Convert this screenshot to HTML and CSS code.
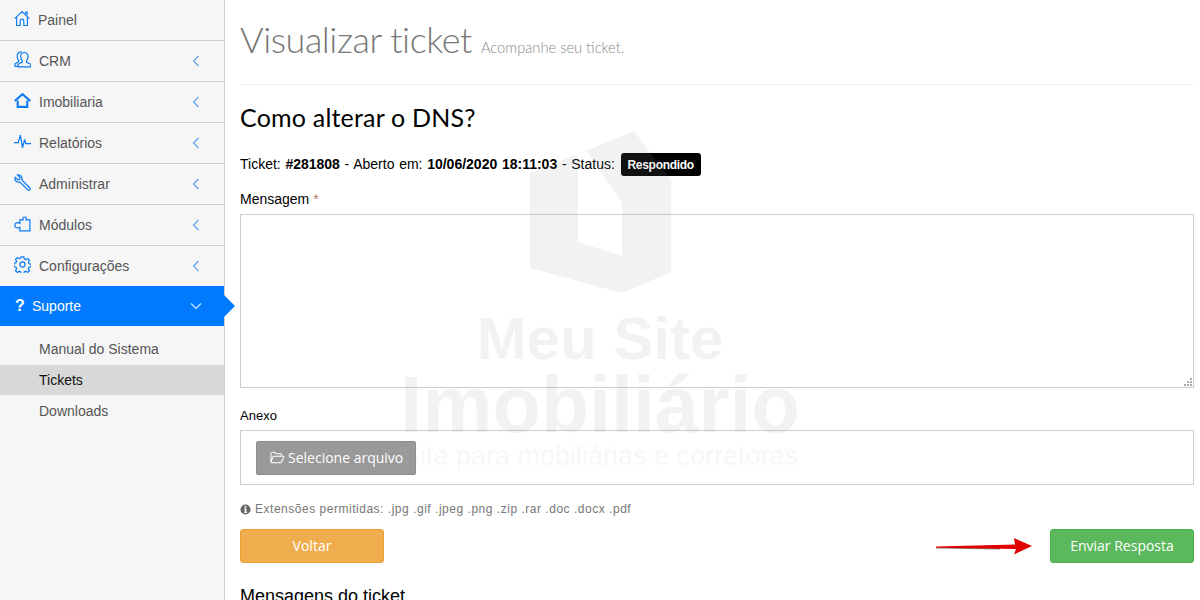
FILE: index.html
```html
<!DOCTYPE html>
<html lang="en">
<head>
    <meta charset="UTF-8">
    <title>Visualizar ticket</title>
    <link rel="stylesheet" href="styles.css">
</head>
<body>
    <div class="app">
        <nav class="sidebar">
            <a class="nav-item">
                <svg class="nav-icon home" viewBox="0 0 16 16"><path d="M.7 8.200 8 1l7.300 7.200M2.600 6.600V15h3.600v-4.600a1.800 1.800 0 0 1 3.600 0V15h3.600V6.600M11.600 3.200V1.600h1.600v3.200"/></svg>
                <span class="nav-label">Painel</span>
            </a>
            <a class="nav-item">
                <svg class="nav-icon" viewBox="0 0 16 16"><path d="M7.200 1C4.500.5 3 2.500 3 5c0 1.500.5 3 1.500 4v1L1 12v2.500h2.800"/><path d="M9.700 1.400c-2 0-3.400 1.600-3.400 3.800 0 1.500.6 2.900 1.500 3.800v1.400L3.800 12.500V15h12v-2.500l-4-2.100V9c.9-.9 1.400-2.300 1.400-3.800 0-2.200-1.500-3.800-3.500-3.800z"/></svg>
                <span class="nav-label">CRM</span>
                <svg class="chev" viewBox="0 0 8 12"><path d="M6.500 1 1.500 6l5 5"/></svg>
            </a>
            <a class="nav-item">
                <svg class="nav-icon thick" viewBox="0 0 16 16"><path d="M.6 8.500 8 2l7.400 6.500M3.500 8v6h9V8"/></svg>
                <span class="nav-label">Imobiliaria</span>
                <svg class="chev" viewBox="0 0 8 12"><path d="M6.500 1 1.500 6l5 5"/></svg>
            </a>
            <a class="nav-item">
                <svg class="nav-icon" viewBox="0 0 16 16"><path d="M0 9h4L6 2l2 12 2-8 1 4h5"/></svg>
                <span class="nav-label">Relatórios</span>
                <svg class="chev" viewBox="0 0 8 12"><path d="M6.500 1 1.500 6l5 5"/></svg>
            </a>
            <a class="nav-item">
                <svg class="nav-icon" viewBox="0 0 16 16"><path d="M3.400.9 5.600 3l-.3 1.900-1.900.4L1.200 3.100C.6 4.700 1 6 2 6.900c1 .8 2.200 1 3.400.5l7.400 7.400c.6.600 1.500.600 2 .1s.5-1.400-.1-2L7.300 5.500c.5-1.200.3-2.500-.6-3.500C5.800 1 4.700.5 3.400.9z"/></svg>
                <span class="nav-label">Administrar</span>
                <svg class="chev" viewBox="0 0 8 12"><path d="M6.500 1 1.500 6l5 5"/></svg>
            </a>
            <a class="nav-item">
                <svg class="nav-icon" viewBox="0 0 16 16"><path d="M5.500 4.500h3C7.500 1 12.500 1 11.500 4.500H15V15H5.500v-3.500C2.500 13 .5 11.500.8 9.500 1 7.500 3 6.500 5.500 8z"/></svg>
                <span class="nav-label">Módulos</span>
                <svg class="chev" viewBox="0 0 8 12"><path d="M6.500 1 1.500 6l5 5"/></svg>
            </a>
            <a class="nav-item">
                <svg class="nav-icon" viewBox="0 0 16 16"><circle cx="8" cy="8" r="2.400"/><path d="M6.700.8h2.600l.4 2 1.300.6 1.800-1.100 1.800 1.800-1.100 1.800.6 1.300 2 .4v2.600l-2 .4-.6 1.300 1.100 1.800-1.800 1.800-1.800-1.100-1.300.6-.4 2H6.700l-.4-2-1.300-.6-1.800 1.100-1.800-1.800 1.100-1.800-.6-1.300-2-.4V6.700l2-.4.6-1.300-1.100-1.800 1.800-1.800 1.800 1.100 1.300-.6z"/></svg>
                <span class="nav-label">Configurações</span>
                <svg class="chev" viewBox="0 0 8 12"><path d="M6.500 1 1.500 6l5 5"/></svg>
            </a>
            <a class="nav-item active">
                <span class="help-icon">?</span>
                <span class="nav-label">Suporte</span>
                <svg class="chev-down" viewBox="0 0 12 8"><path d="M1 1.500 6 6.500l5-5"/></svg>
            </a>
            <ul class="submenu">
                <li>Manual do Sistema</li>
                <li class="current">Tickets</li>
                <li>Downloads</li>
            </ul>
        </nav>

        <main class="content">
            <div class="page-head">
                <h1>Visualizar ticket</h1>
                <small>Acompanhe seu ticket.</small>
            </div>

            <h2 class="ticket-title">Como alterar o DNS?</h2>

            <p class="ticket-info">
                Ticket: <strong>#281808</strong> - Aberto em: <strong>10/06/2020 18:11:03</strong> - Status:
                <span class="badge">Respondido</span>
            </p>

            <label class="field-label">Mensagem <span class="req">*</span></label>
            <div class="message-wrap">
                <textarea class="message"></textarea>
                <svg class="grip" viewBox="0 0 9 9"><path d="M7 1h2v2H7zM4 4h2v2H4zM7 4h2v2H7zM1 7h2v2H1zM4 7h2v2H4zM7 7h2v2H7z"/></svg>
            </div>

            <label class="field-label attach-label">Anexo</label>
            <div class="file-box">
                <span class="file-btn">
                    <svg class="folder" viewBox="0 0 16 13"><path d="M1 11.500V2.200C1 1.500 1.500 1 2.200 1h2.900l1.300 1.500h4.800c.7 0 1.200.5 1.200 1.200v1.400M1 11.500c0 .3.200.5.500.5h10.200l3-5.800c.2-.5 0-1-.6-1H4.300c-.5 0-.9.200-1.100.6L1 11.500z"/></svg>
                    Selecione arquivo
                </span>
            </div>

            <p class="help-text">
                <svg class="info-icon" viewBox="0 0 12 12"><circle cx="6" cy="6" r="5.500"/><rect class="info-mark" x="5" y="2.300" width="2" height="1.700"/><path class="info-mark" d="M4.500 5h2.500v3.800h.7v1H4.500v-1h.7V6h-.7z"/></svg>
                Extensões permitidas: .jpg .gif .jpeg .png .zip .rar .doc .docx .pdf
            </p>

            <div class="actions">
                <button class="btn btn-back">Voltar</button>
                <button class="btn btn-send">Enviar Resposta</button>
            </div>

            <h3 class="messages-title">Mensagens do ticket</h3>
        </main>
    </div>

    <!-- marca d'agua por cima da pagina -->
    <div class="watermark">
        <svg class="wm-logo" viewBox="0 0 141 162"><path d="M0 42 48 23V111L92 125V71L56 20 104 0 141 49V141L92 162 0 137z"/></svg>
        <div class="wm-name">Meu Site</div>
        <div class="wm-brand">Imobiliário</div>
        <div class="wm-tag">Site para mobiliárias e corretores</div>
    </div>

    <svg class="arrow" viewBox="0 0 98 20"><path class="arrow-shadow" d="M1 10.500 65 10.500V12.500L1 11.500z"/><path class="arrow-body" d="M1 9.500 80 7.500 79 1 97 9 79 17.500 81 12 1 10.800z"/></svg>
</body>
</html>
```

FILE: styles.css
```css
html, body {
    margin: 0;
    height: 100%;
    overflow: hidden;
}
body {
    font-family: "Liberation Sans", Arial, sans-serif;
    font-size: 14px;
    color: #000;
    background: #fff;
}
.app {
    display: flex;
    height: 600px;
    overflow: hidden;
}

/* menu lateral */
.sidebar {
    width: 224px;
    flex: none;
    background: #f6f6f6;
    border-right: 1px solid #d0d0d0;
}
.nav-item {
    display: flex;
    align-items: center;
    height: 40px;
    padding: 0 20px 0 14px;
    border-bottom: 1px solid #cfcfcf;
    color: #555;
}
.nav-icon {
    width: 17px;
    height: 17px;
    margin-right: 8px;
    margin-top: -3px;
    fill: none;
    stroke: #0b7bf5;
    stroke-width: 1.150;
}
.nav-icon.home {
    width: 16px;
}
.nav-icon.thick {
    stroke-width: 2;
}
.nav-label {
    flex: 1;
}
.chev {
    width: 8px;
    height: 12px;
    margin-right: 4px;
    fill: none;
    stroke: #5a9ff0;
    stroke-width: 1.100;
}
.nav-item.active {
    position: relative;
    margin-top: -1px;
    background: #007bff;
    border-bottom: none;
    color: #fff;
    padding-right: 22px;
}
.nav-item.active::after {
    content: "";
    position: absolute;
    right: -11px;
    top: 9px;
    border-left: 11px solid #007bff;
    border-top: 11px solid transparent;
    border-bottom: 11px solid transparent;
}
.help-icon {
    width: 17px;
    font-weight: bold;
    font-size: 16px;
    padding-left: 1px;
}
.chev-down {
    width: 12px;
    height: 8px;
    fill: none;
    stroke: #cfe4ff;
    stroke-width: 1.100;
}
.submenu {
    list-style: none;
    margin: 0;
    padding: 8px 0 0;
}
.submenu li {
    height: 30px;
    line-height: 30px;
    padding-left: 39px;
    margin-bottom: 1px;
    color: #555;
}
.submenu li.current {
    background: #d8d8d8;
    color: #111;
}

/* conteudo */
.content {
    flex: 1;
    min-width: 0;
    padding: 0 6px 0 15px;
}
.page-head {
    display: flex;
    align-items: baseline;
    gap: 9px;
    height: 85px;
    box-sizing: border-box;
    padding-top: 16px;
    border-bottom: 1px solid #eee;
}
.page-head h1 {
    margin: 0;
    font-family: Lato, sans-serif;
    font-weight: 300;
    font-size: 36px;
    line-height: 46px;
    letter-spacing: -.45px;
    color: #777;
}
.page-head small {
    font-family: Lato, sans-serif;
    font-weight: 300;
    font-size: 14.700px;
    color: #888;
}
.ticket-title {
    margin: 17px 0 0;
    font-family: Lato, sans-serif;
    font-weight: 400;
    font-size: 25px;
    line-height: 30px;
    letter-spacing: .2px;
}
.ticket-info {
    margin: 19px 0 0;
    height: 26px;
    line-height: 26px;
    word-spacing: .8px;
}
.badge {
    display: inline-block;
    padding: 0 7px;
    height: 23px;
    line-height: 24px;
    background: #000;
    color: #fff;
    font-size: 12px;
    font-weight: bold;
    letter-spacing: -.3px;
    border-radius: 3px;
    margin-left: 1px;
}
.field-label {
    display: block;
    margin-top: 12px;
    height: 20px;
    line-height: 20px;
}
.req {
    color: #c0776a;
}
.message-wrap {
    position: relative;
    margin-top: 5px;
}
.message {
    display: block;
    box-sizing: border-box;
    width: 100%;
    height: 174px;
    border: 1px solid #ccc;
    background: #fff;
    resize: none;
}
.grip {
    position: absolute;
    right: 2px;
    bottom: 2px;
    width: 9px;
    height: 9px;
    fill: #aaa;
}
.attach-label {
    margin-top: 18px;
    font-size: 13px;
}
.file-box {
    box-sizing: border-box;
    height: 55px;
    margin-top: 4px;
    padding: 10px 15px;
    border: 1px solid #ccc;
}
.file-btn {
    display: flex;
    align-items: center;
    box-sizing: border-box;
    width: 160px;
    height: 34px;
    padding: 0 0 2px 13px;
    background: #999;
    border: 1px solid #8c8c8c;
    border-radius: 2px;
    color: #fff;
    font-family: "Open Sans", sans-serif;
    font-size: 14px;
}
.folder {
    width: 15px;
    height: 13px;
    margin-right: 3px;
    margin-top: 1px;
    fill: none;
    stroke: #fff;
    stroke-width: 1.100;
}
.help-text {
    display: flex;
    align-items: center;
    margin: 15px 0 0;
    height: 18px;
    font-size: 12px;
    letter-spacing: .52px;
    color: #777;
}
.info-icon {
    width: 11px;
    height: 11px;
    margin-right: 4px;
    fill: #666;
}
.info-mark {
    fill: #fff;
}
.actions {
    display: flex;
    justify-content: space-between;
    margin-top: 11px;
}
.btn {
    box-sizing: border-box;
    width: 144px;
    height: 34px;
    padding-bottom: 3px;
    border-radius: 3px;
    color: #fff;
    font-family: "Open Sans", sans-serif;
    font-size: 14px;
}
.btn-back {
    background: #f0ad4e;
    border: 1px solid #eea236;
}
.btn-send {
    background: #5cb85c;
    border: 1px solid #4cae4c;
}
.messages-title {
    margin: 22px 0 0;
    font-size: 18px;
    font-weight: normal;
    line-height: 22px;
}

/* overlays */
.watermark {
    position: absolute;
    left: 0;
    top: 131px;
    width: 1200px;
    display: flex;
    flex-direction: column;
    align-items: center;
    color: #949494;
    opacity: .115;
    pointer-events: none;
}
.wm-logo {
    width: 141px;
    height: 162px;
    fill: #949494;
}
.wm-name {
    margin-top: 16px;
    font-size: 60px;
    font-weight: bold;
    line-height: 60px;
}
.wm-brand {
    font-size: 79px;
    font-weight: bold;
    line-height: 72px;
}
.wm-tag {
    font-size: 27px;
    line-height: 31px;
    color: #bbb;
}
.arrow {
    position: absolute;
    left: 935px;
    top: 537px;
    width: 98px;
    height: 20px;
}
.arrow-body {
    fill: #e00000;
}
.arrow-shadow {
    fill: #888;
}
```
